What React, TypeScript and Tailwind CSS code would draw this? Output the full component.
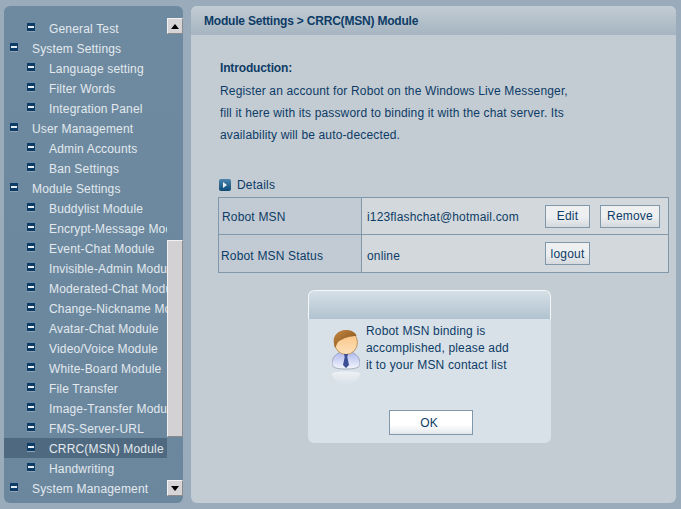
const menu: { label: string; child?: boolean; active?: boolean }[] = [
  { label: 'General Test', child: true },
  { label: 'System Settings' },
  { label: 'Language setting', child: true },
  { label: 'Filter Words', child: true },
  { label: 'Integration Panel', child: true },
  { label: 'User Management' },
  { label: 'Admin Accounts', child: true },
  { label: 'Ban Settings', child: true },
  { label: 'Module Settings' },
  { label: 'Buddylist Module', child: true },
  { label: 'Encrypt-Message Module', child: true },
  { label: 'Event-Chat Module', child: true },
  { label: 'Invisible-Admin Module', child: true },
  { label: 'Moderated-Chat Module', child: true },
  { label: 'Change-Nickname Module', child: true },
  { label: 'Avatar-Chat Module', child: true },
  { label: 'Video/Voice Module', child: true },
  { label: 'White-Board Module', child: true },
  { label: 'File Transfer', child: true },
  { label: 'Image-Transfer Module', child: true },
  { label: 'FMS-Server-URL', child: true },
  { label: 'CRRC(MSN) Module', child: true, active: true },
  { label: 'Handwriting', child: true },
  { label: 'System Management' },
];

function Bullet() {
  return (
    <span className="flex h-[8px] w-[8px] shrink-0 items-center justify-center bg-[#0d3c66] shadow-[0_1px_0_#8fa3b5]">
      <span className="h-[2px] w-[6px] bg-[#e4ebf0]" />
    </span>
  );
}

function ScrollButton({ up }: { up?: boolean }) {
  return (
    <div className="flex h-[16px] w-[16px] items-center justify-center border border-t-[#f1f1f1] border-l-[#f1f1f1] border-r-[#8b8b8b] border-b-[#8b8b8b] bg-[#d6d4d6]">
      <svg width="8" height="5" viewBox="0 0 8 5">
        <path d={up ? 'M0 5 L4 0 L8 5 Z' : 'M0 0 L8 0 L4 5 Z'} fill="#000" />
      </svg>
    </div>
  );
}

function Sidebar() {
  return (
    <aside className="relative h-[497px] w-[179px] shrink-0 overflow-hidden rounded-[6px] bg-[linear-gradient(#6d8aa0,#6a879e)] pt-[12px]">
      <ul className="w-[163px] overflow-hidden">
        {menu.map((m) => (
          <li
            key={m.label}
            className={`flex h-[20px] items-center whitespace-nowrap ${m.child ? 'pl-[23px]' : 'pl-[6px]'} ${m.active ? 'bg-[#4f6a80]' : ''}`}
          >
            <span className="-mt-[2px]">
              <Bullet />
            </span>
            <span className="ml-[14px] pt-[2px] text-[12px] tracking-[0.17px] text-[#e3e9ee]">{m.label}</span>
          </li>
        ))}
      </ul>
      {/* scrollbar sits over the list */}
      <div className="absolute top-[12px] right-0 flex h-[478px] w-[16px] flex-col justify-between">
        <ScrollButton up />
        <div className="absolute top-[222px] h-[197px] w-[16px] border border-t-[#f1f1f1] border-l-[#f1f1f1] border-r-[#8b8b8b] border-b-[#8b8b8b] bg-[#d3d1d4]" />
        <ScrollButton />
      </div>
    </aside>
  );
}

function TableButton({ label, width }: { label: string; width: string }) {
  return (
    <button
      className={`h-[23px] ${width} border border-[#8198ab] bg-[linear-gradient(#eef0f2,#eceef0_55%,#d4d9dd)] text-center text-[12px] tracking-[0.2px] text-[#0d3c66]`}
    >
      {label}
    </button>
  );
}

function Avatar() {
  return (
    <svg width="28" height="56" viewBox="0 0 28 56" className="shrink-0">
      <defs>
        <linearGradient id="skin" x1="0" y1="0" x2="0" y2="1">
          <stop offset="0" stopColor="#f9c27c" />
          <stop offset="1" stopColor="#fde0bb" />
        </linearGradient>
        <linearGradient id="hair" x1="0" y1="0" x2="1" y2="1">
          <stop offset="0" stopColor="#c58a44" />
          <stop offset="1" stopColor="#7d4a12" />
        </linearGradient>
        <linearGradient id="shirt" x1="0" y1="0" x2="0" y2="1">
          <stop offset="0" stopColor="#aeb9ee" />
          <stop offset="1" stopColor="#f4f5fc" />
        </linearGradient>
        <linearGradient id="reflect" x1="0" y1="0" x2="0" y2="1">
          <stop offset="0" stopColor="#eef1f5" />
          <stop offset="1" stopColor="#d9e1e8" />
        </linearGradient>
      </defs>
      <path d="M0 34 C0 28 3 24 9 22 L19 22 C25 24 28 28 28 34 C28 38 22 39 14 39 C6 39 0 38 0 34 Z" fill="url(#shirt)" stroke="#8f96a8" strokeWidth="0.7" />
      <ellipse cx="14" cy="12.500" rx="11.500" ry="12" fill="url(#skin)" stroke="#a9793f" strokeWidth="0.7" />
      <path d="M2 14 C0 5 7 0 14 0 C20 0 24 3 24.500 6 C19 6 11 8 6 12 C5 13 4 17 3 18 Z" fill="url(#hair)" />
      <path d="M12 24 L16 24 L15.300 27 L17 35 L14 38 L11 35 L12.700 27 Z" fill="#3d4f94" />
      <path d="M0 43 C5 41 23 41 28 43 C28 48 23 54 14 54 C5 54 0 48 0 43 Z" fill="url(#reflect)" />
    </svg>
  );
}

function Dialog() {
  return (
    <div className="absolute top-[284px] left-[117px] h-[153px] w-[243px] overflow-hidden rounded-[6px] bg-[#d9e1e8]">
      <div className="h-[29px] rounded-t-[6px] border-x border-t border-[#f4f6f8] bg-[linear-gradient(#d5dfe6,#b1c3d0)]" />
      <div className="flex pt-[11px] pl-[24px]">
        <Avatar />
        <p className="-mt-[7px] ml-[6px] text-[12px] leading-[17px] tracking-[0.17px] text-[#0d3c66]">
          Robot MSN binding is
          <br />
          accomplished, please add
          <br />
          it to your MSN contact list
        </p>
      </div>
      <div className="absolute bottom-[8px] left-[81px]">
        <button className="h-[25px] w-[84px] border border-[#8198ab] bg-[linear-gradient(#ffffff,#ffffff_60%,#e3e8ec)] pr-[4px] text-[12px] tracking-[0.2px] text-[#0d3c66]">
          OK
        </button>
      </div>
    </div>
  );
}

function Main() {
  return (
    <main className="relative h-[497px] w-[485px] overflow-hidden rounded-[6px] bg-[#c3cbd3]">
      <header className="flex h-[29px] items-center bg-[linear-gradient(#c2ccd3,#a6b5c1)] pl-[13px] text-[12px] font-bold tracking-[-0.2px] text-[#0d3c66]">
        Module Settings &gt; CRRC(MSN) Module
      </header>
      <section className="pt-[25px] pl-[29px] text-[12px] tracking-[0.15px] text-[#0d3c66]">
        <h2 className="h-[20px] leading-[16px] font-bold tracking-[-0.15px]">Introduction:</h2>
        <p className="w-[400px] leading-[22px]">
          Register an account for Robot on the Windows Live Messenger,
          <br />
          fill it here with its password to binding it with the chat server. Its
          <br />
          availability will be auto-decected.
        </p>
      </section>
      <div className="mt-[29px] flex h-[20px] items-center pl-[28px] text-[12px] tracking-[0.2px] text-[#0d3c66]">
        <span className="mr-[6px] flex h-[12px] w-[12px] items-center justify-center rounded-[2px] bg-[linear-gradient(#4a86ad,#0d4a78)]">
          <svg width="6" height="6" viewBox="0 0 6 6">
            <path d="M1 0 L5 3 L1 6 Z" fill="#e8f0f5" />
          </svg>
        </span>
        Details
      </div>
      <table className="mt-[2px] ml-[27px] w-[451px] table-fixed border-collapse text-[12px] tracking-[0.17px] text-[#0d3c66]">
        <tbody>
          <tr className="h-[37px]">
            <td className="w-[143px] border border-[#8198ab] bg-[#c2cbd4] pt-[2px] pl-[3px]">Robot MSN</td>
            <td className="border border-[#8198ab] bg-[#d3d8dc] pl-[5px]">
              <div className="flex items-center">
                <span className="w-[178px] pt-[2px]">i123flashchat@hotmail.com</span>
                <TableButton label="Edit" width="w-[45px]" />
                <span className="ml-[10px]">
                  <TableButton label="Remove" width="w-[60px]" />
                </span>
              </div>
            </td>
          </tr>
          <tr className="h-[38px]">
            <td className="border border-[#8198ab] bg-[#c2cbd4] pt-[4px] pl-[2px]">Robot MSN Status</td>
            <td className="border border-[#8198ab] bg-[#d3d8dc] pl-[5px]">
              <div className="flex items-center">
                <span className="w-[178px] pt-[4px]">online</span>
                <TableButton label="logout" width="w-[45px]" />
              </div>
            </td>
          </tr>
        </tbody>
      </table>
      <Dialog />
    </main>
  );
}

export default function App() {
  return (
    <div className="flex h-[509px] w-[681px] gap-[8px] overflow-hidden bg-[#9aabbb] pt-[6px] pl-[4px] font-['Liberation_Sans',Arial,sans-serif]">
      <Sidebar />
      <Main />
    </div>
  );
}
